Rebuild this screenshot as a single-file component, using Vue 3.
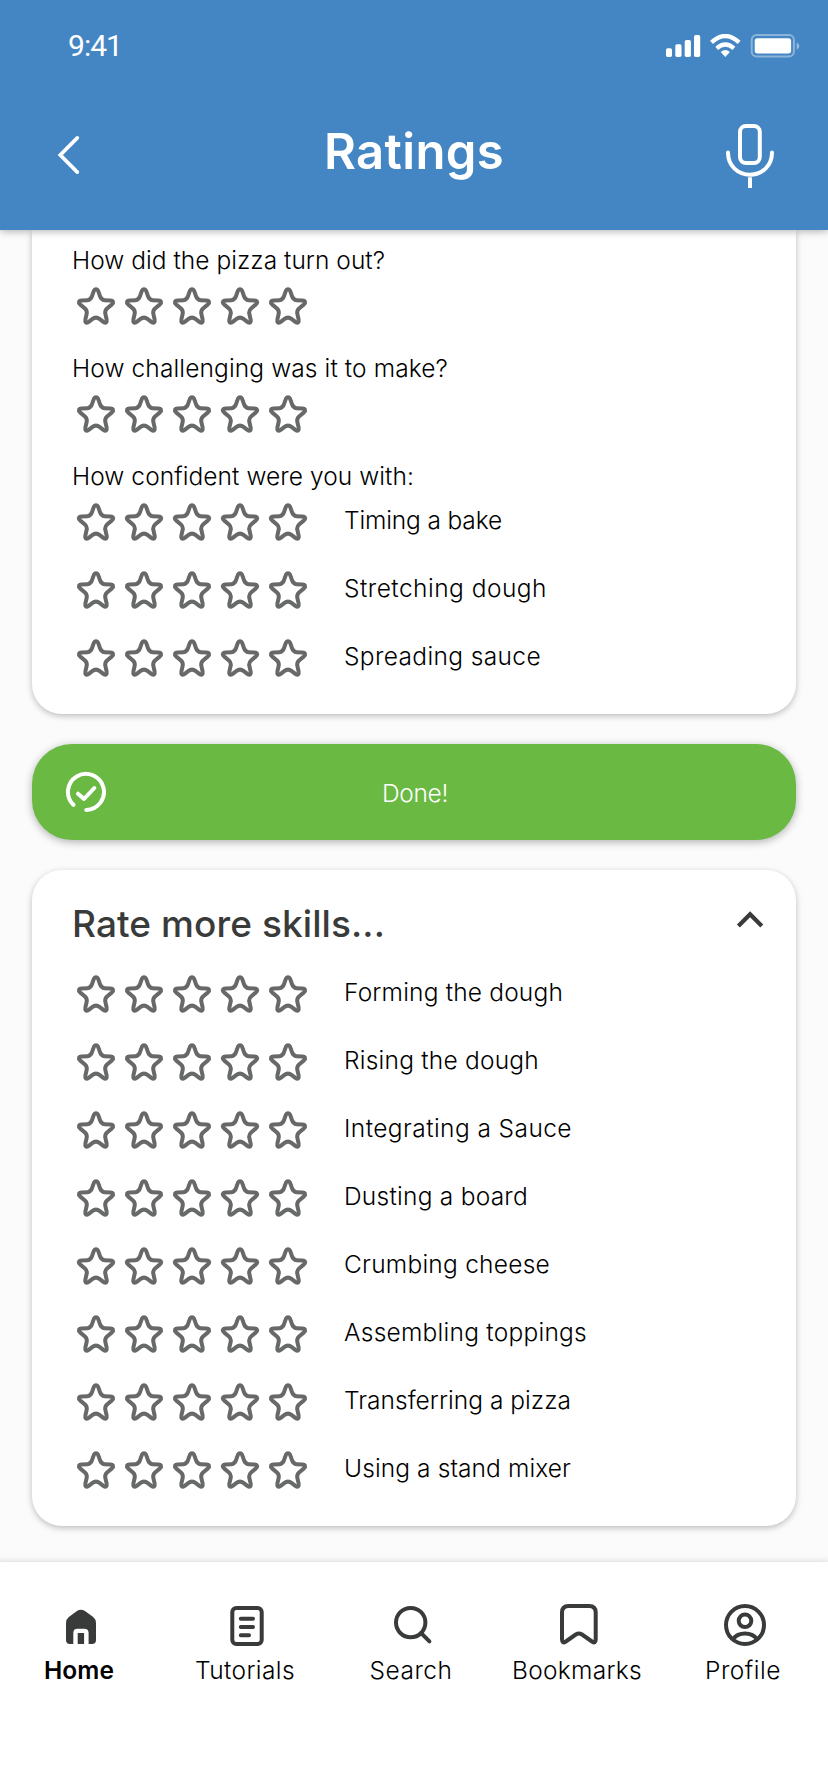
<script setup>
const questions = [
  { text: 'How did the pizza turn out?', width: 313 },
  { text: 'How challenging was it to make?', width: 376 }
]
const confidence = [
  { text: 'Timing a bake', width: 158 },
  { text: 'Stretching dough', width: 203 },
  { text: 'Spreading sauce', width: 197 }
]
const skills = [
  { text: 'Forming the dough', width: 219 },
  { text: 'Rising the dough', width: 195 },
  { text: 'Integrating a Sauce', width: 228 },
  { text: 'Dusting a board', width: 184 },
  { text: 'Crumbing cheese', width: 206 },
  { text: 'Assembling toppings', width: 243 },
  { text: 'Transferring a pizza', width: 227 },
  { text: 'Using a stand mixer', width: 227 }
]
const tabs = [
  { text: 'Home', width: 70, icon: 'home', active: true },
  { text: 'Tutorials', width: 100, icon: 'tutorials' },
  { text: 'Search', width: 83, icon: 'search' },
  { text: 'Bookmarks', width: 130, icon: 'bookmarks' },
  { text: 'Profile', width: 76, icon: 'profile' }
]

// Tracks a label so that it spans the given advance width.
const vTrack = {
  mounted(el, { value }) {
    const natural = el.getBoundingClientRect().width
    el.style.letterSpacing = `${(value - natural) / el.textContent.length}px`
  }
}
</script>

<template>
  <div class="screen">
    <svg class="defs" aria-hidden="true">
      <symbol id="star" viewBox="0 0 48 48">
        <path d="M24 7.3C25.2 7.3 26 8.3 26.5 9.8L28 14.2C28.8 16.8 30 18 32.6 18.2L38.3 18.6C41.5 18.9 42 20.6 39.7 22.6L35.3 26.2C33.4 27.8 32.8 29.4 33.3 31.8L34.6 37.4C35.2 40.5 34 41.6 31.3 39.8L27.8 37.1C25.3 35.2 22.7 35.2 20.2 37.1L16.7 39.8C14 41.6 12.8 40.5 13.4 37.4L14.7 31.8C15.2 29.4 14.6 27.8 12.7 26.2L8.3 22.6C6 20.6 6.5 18.9 9.7 18.6L15.4 18.2C18 18 19.2 16.8 20 14.2L21.5 9.8C22 8.3 22.8 7.3 24 7.3Z" />
      </symbol>
    </svg>

    <header class="header">
      <div class="status">
        <span v-track="54" class="time">9:41</span>
        <svg class="signals" width="134" height="24" viewBox="666 34 134 24" fill="#fff">
          <rect x="666" y="48.3" width="6" height="8.7" rx="1.7" />
          <rect x="675.3" y="44.3" width="6.2" height="12.7" rx="1.7" />
          <rect x="684.7" y="40" width="6.2" height="17" rx="1.7" />
          <rect x="694" y="35" width="6.2" height="22" rx="1.7" />
          <path d="M711.5 42.3Q725.3 29.8 739.1 42.3M716.7 48.3Q725.3 40.8 733.9 48.3" fill="none" stroke="#fff" stroke-width="4.3" />
          <path d="M720.7 52Q725.3 47.8 729.9 52L725.3 57Z" />
          <rect x="751.7" y="35" width="42.2" height="21.6" rx="5" fill="none" stroke="#fff" stroke-width="2" opacity=".38" />
          <rect x="754.7" y="38.3" width="36.4" height="15.1" rx="2.7" />
          <path d="M796.7 42.4Q799.3 43.6 799.3 46T796.7 49.8Z" opacity=".45" />
        </svg>
      </div>
      <div class="titlebar">
        <svg class="back" width="28" height="44" viewBox="54 133 28 44" fill="none" stroke="#fff" stroke-width="3.7" stroke-linecap="round">
          <path d="M77.3 137.9L60.3 155L77.3 172.1" />
        </svg>
        <h1 class="title"><span v-track="180">Ratings</span></h1>
        <svg class="mic" width="60" height="70" viewBox="720 120 60 70" fill="none" stroke="#fff" stroke-width="4" stroke-linecap="round">
          <rect x="740" y="126" width="19.8" height="37" rx="6" />
          <path d="M728 152.5C728 166 738 174.7 750 174.7S772 166 772 152.5" />
          <path d="M750 177.3V188" stroke-linecap="butt" />
        </svg>
      </div>
    </header>

    <main class="content">
      <section class="card card-top">
        <template v-for="q in questions" :key="q.text">
          <p class="question"><span v-track="q.width">{{ q.text }}</span></p>
          <div class="rating">
            <div class="stars"><svg v-for="n in 5" :key="n" class="star"><use href="#star" /></svg></div>
          </div>
        </template>
        <p class="question"><span v-track="342">How confident were you with:</span></p>
        <div class="rows">
          <div v-for="s in confidence" :key="s.text" class="rating">
            <div class="stars"><svg v-for="n in 5" :key="n" class="star"><use href="#star" /></svg></div>
            <span v-track="s.width" class="label">{{ s.text }}</span>
          </div>
        </div>
      </section>

      <button class="done">
        <svg class="check" width="44" height="44" viewBox="64 770 44 44" fill="none" stroke="#fff" stroke-width="4" stroke-linecap="round" stroke-linejoin="round">
          <path d="M86.3 809.9A18 18 0 1 0 73.4 804.8" />
          <path d="M78 793.7L84 799L94.3 788" />
        </svg>
        <span v-track="68" class="done-text">Done!</span>
      </button>

      <section class="card">
        <div class="card-head">
          <h2 class="card-title"><span v-track="313">Rate more skills...</span></h2>
          <svg class="chevron" width="28" height="18" viewBox="736 910 28 18" fill="none" stroke="#383b3a" stroke-width="4.2">
            <path d="M738.4 925.9L750.1 914.2L761.8 925.9" />
          </svg>
        </div>
        <div class="rows">
          <div v-for="s in skills" :key="s.text" class="rating">
            <div class="stars"><svg v-for="n in 5" :key="n" class="star"><use href="#star" /></svg></div>
            <span v-track="s.width" class="label">{{ s.text }}</span>
          </div>
        </div>
      </section>
    </main>

    <nav class="tabs">
      <a v-for="t in tabs" :key="t.text" class="tab" :class="{ active: t.active }">
        <svg class="tab-icon" viewBox="0 0 50 50">
          <template v-if="t.icon === 'home'">
            <path class="solid" d="M10 23.3Q10 19.3 12.8 17.1L21.3 10.8Q24.9 8.5 28.6 10.8L37.2 17.1Q40 19.3 40 23.3V40Q40 44 36 44H32.6V33Q32.6 28.7 28.3 28.7H21.5Q17.3 28.7 17.3 33V44H14Q10 44 10 40Z" />
            <rect class="solid" x="21.7" y="33" width="6.4" height="11" />
          </template>
          <template v-else-if="t.icon === 'tutorials'">
            <rect x="10.3" y="8" width="29.4" height="36" rx="4" />
            <path d="M18.8 18.7H31M18.8 27H31M18.8 35.3H27" />
          </template>
          <template v-else-if="t.icon === 'search'">
            <circle cx="22.7" cy="22.6" r="14.7" />
            <path d="M33.2 33.2L41.4 41.4" />
          </template>
          <path v-else-if="t.icon === 'bookmarks'" d="M8 12.5Q8 6 14.5 6H35.2Q41.7 6 41.7 12.5V39.5Q41.7 44 38 41.5L28 34.5Q24.9 32.5 21.8 34.5L11.8 41.5Q8 44 8 39.5Z" />
          <template v-else>
            <circle cx="25" cy="25" r="19" />
            <circle cx="25" cy="20.8" r="6.3" />
            <path d="M13 39C16 35 20 33.4 25 33.4S34 35 37 39" />
          </template>
        </svg>
        <span v-track="t.width" class="tab-label">{{ t.text }}</span>
      </a>
    </nav>
  </div>
</template>

<style>
body { margin: 0; }
</style>

<style scoped>
.screen {
  width: 828px;
  height: 1792px;
  display: flex;
  flex-direction: column;
  overflow: hidden;
  background: #fbfbfb;
  color: #000;
  font-family: Inter, "Open Sans", sans-serif;
  font-size: 24.5px;
  font-weight: 300;
}
.defs { position: absolute; width: 0; height: 0; }
.header {
  position: relative;
  z-index: 1;
  flex: none;
  height: 230px;
  background: #4486c3;
  color: #fff;
  box-shadow: 0 1px 8px rgba(0, 0, 0, .32);
}
.status {
  height: 92px;
  padding: 0 28px 0 68px;
  display: flex;
  align-items: center;
  justify-content: space-between;
}
.time { font: 400 30px/36px Roboto, sans-serif; }
.titlebar {
  height: 126px;
  padding: 0 48px 0 54px;
  display: flex;
  align-items: center;
  justify-content: space-between;
}
.title {
  margin: 0;
  padding: 0 0 6px 26px;
  font-size: 49px;
  line-height: 60px;
  font-weight: 600;
}
.content { flex: none; padding: 0 32px; height: 1332px; box-sizing: border-box; display: flex; flex-direction: column; gap: 30px; }
.card {
  background: #fff;
  border-radius: 30px;
  box-shadow: 0 2px 6px rgba(0, 0, 0, .25);
  padding: 0 32px 0 40px;
  box-sizing: border-box;
  height: 656px;
}
.card-top { height: 484px; border-radius: 0 0 30px 30px; padding-top: 10px; }
.question { margin: 0; height: 42px; line-height: 40px; white-space: nowrap; }
.question + .rating { margin-bottom: 18px; }
.rating { display: flex; align-items: flex-start; height: 48px; }
.rows { display: flex; flex-direction: column; gap: 20px; }
.stars { display: flex; width: 240px; margin-right: 32px; }
.star { width: 48px; height: 48px; fill: none; stroke: #676968; stroke-width: 4; stroke-linejoin: round; }
.label { line-height: 44px; white-space: nowrap; }
.done {
  flex: none;
  height: 96px;
  border: 0;
  border-radius: 40px;
  background: #6ab943;
  color: #fff;
  box-shadow: 0 2px 8px rgba(0, 0, 0, .3);
  font: inherit;
  display: grid;
  grid-template-columns: 44px 1fr 44px;
  align-items: center;
  padding: 0 32px;
}
.done-text { justify-self: center; padding: 2px 0 0 2px; }
.card-head { display: flex; justify-content: space-between; height: 98px; padding-bottom: 2px; align-items: center; }
.card-title { margin: 0; padding-top: 10px; font-size: 37px; line-height: 50px; font-weight: 500; color: #383b3a; }
.tabs {
  flex: 1;
  display: grid;
  grid-template-columns: repeat(5, 166px);
  margin-left: -2px;
  padding-top: 38px;
  background: #fff;
  box-shadow: 0 -1px 6px rgba(0, 0, 0, .14);
}
.tab { display: flex; flex-direction: column; align-items: center; }
.tab-icon { width: 50px; height: 50px; fill: none; stroke: #383b3a; stroke-width: 4; stroke-linecap: round; stroke-linejoin: round; }
.solid { fill: #383b3a; stroke: none; }
.tab-label { margin-right: 4px; line-height: 40px; white-space: nowrap; }
.active .tab-label { font-weight: 600; }
</style>
